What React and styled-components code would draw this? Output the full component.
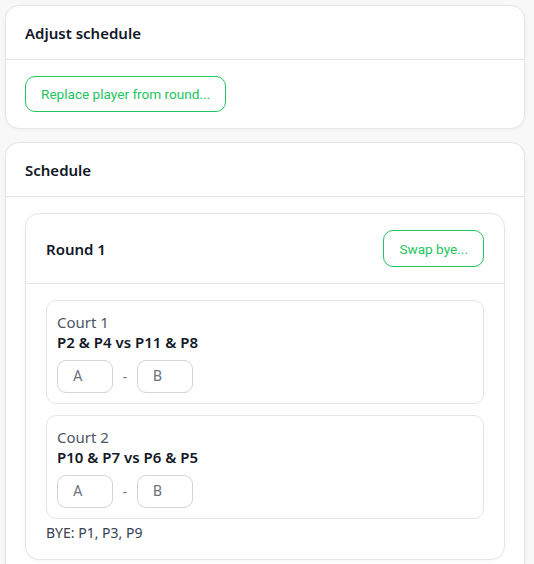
import React from 'react';
import styled, { createGlobalStyle } from 'styled-components';

const GlobalStyle = createGlobalStyle`
  * { box-sizing: border-box; }
  body {
    margin: 0;
    background: #f8f8f8;
    font-family: 'Noto Sans', 'Segoe UI', sans-serif;
    color: #111827;
  }
`;

const Page = styled.div`
  display: flex;
  flex-direction: column;
  gap: 13px;
  padding: 5px 9px 5px 5px;
`;

const Card = styled.section`
  background: #fff;
  border: 1px solid #e5e5e5;
  border-radius: 14px;
  box-shadow: 0 1px 4px rgba(0, 0, 0, 0.04);
`;

const CardHeader = styled.div`
  display: flex;
  align-items: center;
  justify-content: space-between;
  min-height: ${(p) => (p.$tall ? '70px' : '54px')};
  padding: 0 ${(p) => (p.$tall ? '20px' : '19px')};
  border-bottom: 1px solid #e5e5e5;
`;

const Title = styled.h3`
  margin: 0;
  font-size: 15px;
  font-weight: 600;
  line-height: 20px;
  color: #111827;
`;

const CardBody = styled.div`
  display: flex;
  flex-direction: column;
  align-items: ${(p) => (p.$start ? 'flex-start' : 'stretch')};
  gap: 11px;
  padding: 16px ${(p) => (p.$inner ? '20px' : '19px')} 16px;
`;

const OutlineButton = styled.button`
  height: ${(p) => (p.$h || 36)}px;
  padding: 0 15px;
  background: #fff;
  border: 1px solid #22c55e;
  border-radius: 10px;
  color: #22c55e;
  font-family: Roboto, 'Liberation Sans', sans-serif;
  font-size: 13.6px;
  cursor: pointer;
`;

const CourtCard = styled.div`
  display: flex;
  flex-direction: column;
  padding: 11px 10px 10px;
  border: 1px solid #e5e5e5;
  border-radius: 10px;
`;

const CourtLabel = styled.div`
  font-size: 15px;
  line-height: 20px;
  color: #4b5563;
`;

const Match = styled.div`
  font-size: 15px;
  line-height: 21px;
  font-weight: 600;
  color: #111827;
  margin-bottom: 7px;
`;

const ScoreRow = styled.div`
  display: flex;
  align-items: center;
  gap: 10px;
`;

const ScoreInput = styled.input`
  width: 56px;
  height: 33px;
  padding: 0 15px;
  border: 1px solid #d4d4d8;
  border-radius: 9px;
  font-family: Roboto, 'Liberation Sans', sans-serif;
  font-size: 14.5px;
  color: #111827;
  outline: none;
  &::placeholder { color: #6b7280; }
`;

const Dash = styled.span`
  font-family: Roboto, 'Liberation Sans', sans-serif;
  font-size: 14px;
  color: #6b7280;
`;

const Bye = styled.div`
  font-size: 14px;
  line-height: 20px;
  color: #374151;
  margin-top: -7px;
`;

const courts = [
  { name: 'Court 1', match: 'P2 & P4 vs P11 & P8' },
  { name: 'Court 2', match: 'P10 & P7 vs P6 & P5' },
];

export default function App() {
  return (
    <>
      <GlobalStyle />
      <Page>
        <Card>
          <CardHeader>
            <Title>Adjust schedule</Title>
          </CardHeader>
          <CardBody $start>
            <OutlineButton $h={36}>Replace player from round...</OutlineButton>
          </CardBody>
        </Card>
        <Card>
          <CardHeader>
            <Title>Schedule</Title>
          </CardHeader>
          <CardBody>
            <Card as="div">
              <CardHeader $tall>
                <Title>Round 1</Title>
                <OutlineButton $h={37}>Swap bye...</OutlineButton>
              </CardHeader>
              <CardBody $inner>
                {courts.map((c) => (
                  <CourtCard key={c.name}>
                    <CourtLabel>{c.name}</CourtLabel>
                    <Match>{c.match}</Match>
                    <ScoreRow>
                      <ScoreInput placeholder="A" />
                      <Dash>-</Dash>
                      <ScoreInput placeholder="B" />
                    </ScoreRow>
                  </CourtCard>
                ))}
                <Bye>BYE: P1, P3, P9</Bye>
              </CardBody>
            </Card>
          </CardBody>
        </Card>
      </Page>
    </>
  );
}
